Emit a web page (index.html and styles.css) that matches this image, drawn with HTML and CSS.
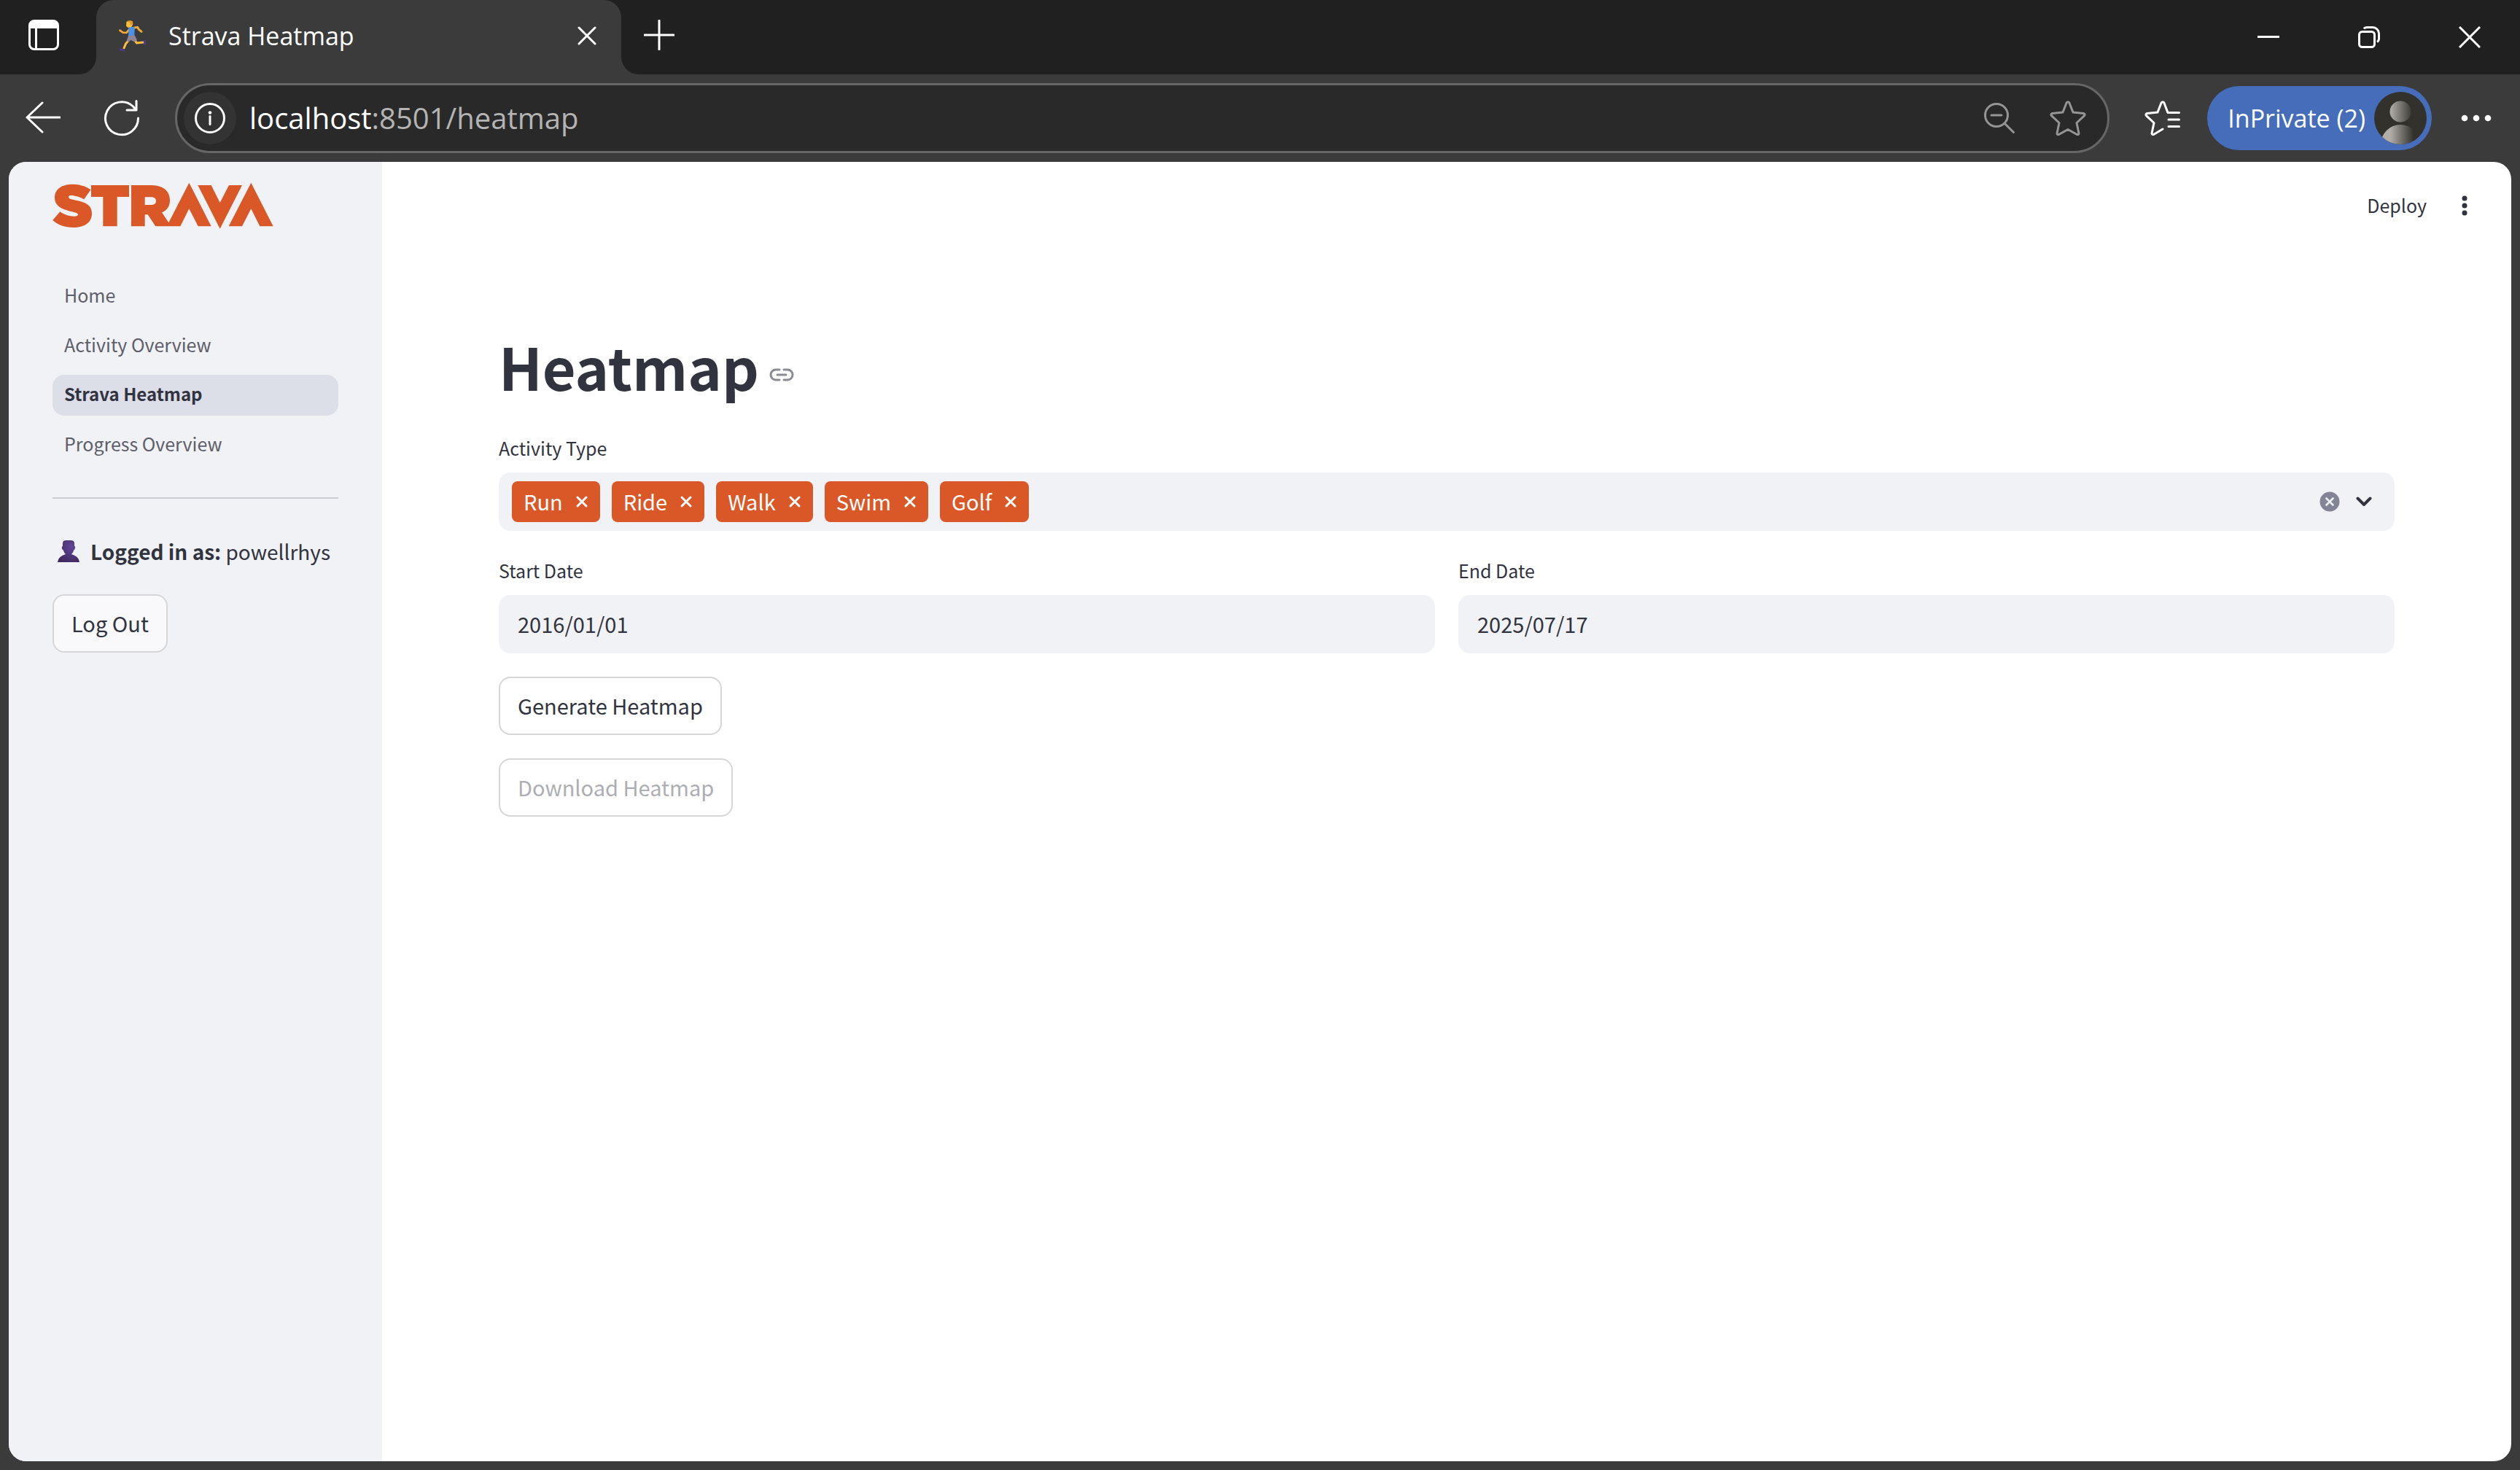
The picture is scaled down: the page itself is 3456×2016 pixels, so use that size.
FILE: index.html
```html
<!DOCTYPE html>
<html lang="en">
<head>
<meta charset="utf-8">
<title>Strava Heatmap</title>
<link rel="stylesheet" href="styles.css">
</head>
<body>
<header class="chrome">
  <div class="tabstrip">
    <div class="strip-start">
      <button class="icon-btn" aria-label="Tab actions">
        <svg width="42" height="42" viewBox="0 0 42 42"><path d="M8 0h26a8 8 0 0 1 8 8v26a8 8 0 0 1-8 8H8a8 8 0 0 1-8-8V8a8 8 0 0 1 8-8zM3 12v22a5 5 0 0 0 5 5h1V12zM12 12v27h22a5 5 0 0 0 5-5V12z" fill="#fff" fill-rule="evenodd"/></svg>
      </button>
    </div>
    <div class="tab-slot">
      <div class="tab">
        <svg class="favicon" width="40" height="44" viewBox="38 46 120 132">
          <path d="M88 82 72 100 58 99 45 90" fill="none" stroke="#f2a92e" stroke-width="8" stroke-linecap="round" stroke-linejoin="round"/>
          <path d="M102 80 118 77 124 87 134 95" fill="none" stroke="#f2a92e" stroke-width="9" stroke-linecap="round" stroke-linejoin="round"/>
          <path d="M82 130 70 144 62 163" fill="none" stroke="#fbbf3c" stroke-width="9" stroke-linecap="round" stroke-linejoin="round"/>
          <path d="M108 132 114 142 142 139" fill="none" stroke="#fbbf3c" stroke-width="9" stroke-linecap="round" stroke-linejoin="round"/>
          <path d="M41 166q10-3 22 0l1 8H48z" fill="#4b3a8f"/>
          <path d="M142 132l10-3v20l-7 2z" fill="#4b3a8f"/>
          <path d="M82 78q14-6 24 0l-1 36-25 3z" fill="#4a92e8"/>
          <path d="M80 113l26-3 10 20-10 8-16-8-12 8-4-8z" fill="#8f8496"/>
          <path d="M72 56q10-8 24-4l3 12-6 12-14 3-8-7z" fill="#fbbf3c"/>
          <path d="M72 54q12-8 26-1l1 12-10 3-3-10z" fill="#e09a25"/>
        </svg>
        <span class="tab-title">Strava Heatmap</span>
        <button class="icon-btn" aria-label="Close tab">
          <svg width="26" height="26" viewBox="0 0 26 26"><path d="M2 2l22 22M24 2L2 24" stroke="#fff" stroke-width="3" stroke-linecap="round"/></svg>
        </button>
      </div>
    </div>
    <div class="strip-rest">
      <button class="icon-btn" aria-label="New tab">
        <svg width="42" height="42" viewBox="0 0 42 42"><path d="M21 1v40M1 21h40" stroke="#fff" stroke-width="3" stroke-linecap="round"/></svg>
      </button>
      <div class="window-controls">
        <button class="icon-btn" aria-label="Minimize"><svg width="30" height="30" viewBox="0 0 30 30"><path d="M0 14.500h30" stroke="#fff" stroke-width="3"/></svg></button>
        <button class="icon-btn" aria-label="Restore"><svg width="30" height="30" viewBox="0 0 30 30" fill="none" stroke="#fff" stroke-width="3"><rect x="1.500" y="7.500" width="21" height="21" rx="4"/><path d="M8 3.500Q9 1.500 13 1.500h7a8.500 8.500 0 0 1 8.500 8.500v7q0 3-2.500 4.500"/></svg></button>
        <button class="icon-btn" aria-label="Close"><svg width="30" height="30" viewBox="0 0 30 30"><path d="M1 1l28 28M29 1L1 29" stroke="#fff" stroke-width="3"/></svg></button>
      </div>
    </div>
  </div>
  <div class="toolbar">
    <button class="icon-btn" aria-label="Back"><svg width="48" height="48" viewBox="0 0 48 48"><path d="M23 3L2 23l21 20M2 23h45" fill="none" stroke="#fff" stroke-width="3" stroke-linecap="round" stroke-linejoin="round"/></svg></button>
    <button class="icon-btn reload" aria-label="Refresh"><svg width="50" height="50" viewBox="0 0 50 50"><path d="M47.500 25A22.500 22.500 0 1 1 40 8.500L45 14M45 1.500V14H32" fill="none" stroke="#fff" stroke-width="3" stroke-linecap="round" stroke-linejoin="round"/></svg></button>
    <div class="address">
      <button class="site-info" aria-label="Site information"><svg width="42" height="42" viewBox="0 0 42 42"><circle cx="21" cy="21" r="19.500" fill="none" stroke="#fff" stroke-width="3"/><path d="M21 18.500v11" stroke="#fff" stroke-width="3" stroke-linecap="round"/><circle cx="21" cy="13.500" r="2.300" fill="#fff"/></svg></button>
      <div class="url"><span class="host">localhost</span>:8501/heatmap</div>
      <button class="icon-btn" aria-label="Zoom"><svg width="42" height="42" viewBox="0 0 42 42" fill="none" stroke="#959595" stroke-width="3" stroke-linecap="round"><circle cx="17" cy="17" r="15.500"/><path d="M10 17h14M28 28l12.500 12.500"/></svg></button>
      <button class="icon-btn" aria-label="Add to favorites"><svg width="50" height="48" viewBox="0 0 50 48"><path d="M23.200 2.800q1.800-2.200 3.600 0L32 16l14.500 1.500q2.500 1 1 3.200L37 30.500 40 45q-.300 2.200-2.500 1.500L25 39.500 12.500 46.500Q10.300 47.200 10 45l3-14.500L2.500 20.700q-1.500-2.200 1-3.200L18 16z" fill="none" stroke="#959595" stroke-width="3" stroke-linejoin="round"/></svg></button>
    </div>
    <button class="icon-btn favorites" aria-label="Favorites"><svg width="50" height="48" viewBox="0 0 50 48" fill="none" stroke="#fff" stroke-width="3" stroke-linecap="round" stroke-linejoin="round"><path d="M47.500 16.500H32L26.800 2.800q-1.800-2.200-3.600 0L18 16 3.500 17.500q-2.500 1-1 3.200L13 30.500 10 45q.300 2.200 2.500 1.500L25 39M33 26h14.500M33 35.500h14.500"/></svg></button>
    <button class="profile"><span>InPrivate (2)</span>
      <svg width="72" height="72" viewBox="0 0 72 72"><defs><linearGradient id="shade" gradientUnits="userSpaceOnUse" x1="22" x2="54" y1="0" y2="0"><stop offset="0" stop-color="#b1aeaa"/><stop offset="1" stop-color="#33312c"/></linearGradient><clipPath id="disc"><circle cx="36" cy="36" r="36"/></clipPath></defs><g clip-path="url(#disc)"><rect width="72" height="72" fill="#33312c"/><circle cx="36" cy="27" r="14.500" fill="url(#shade)"/><circle cx="36" cy="72" r="27" fill="url(#shade)"/></g></svg>
    </button>
    <button class="icon-btn" aria-label="Settings and more"><svg width="42" height="10" viewBox="0 0 42 10" fill="#fff"><circle cx="5" cy="5" r="4.300"/><circle cx="21" cy="5" r="4.300"/><circle cx="37" cy="5" r="4.300"/></svg></button>
  </div>
</header>

<div class="page">
  <aside class="sidebar">
    <svg class="logo" role="img" aria-label="Strava" width="303" height="64" viewBox="36 29 909 192" fill="#da5728">
      <path d="M193 60 166 99C150 90 128 83 112 83 104 83 102 86 102 90 102 100 125 101 150 107 182 115 198 131 198 158 198 195 168 215 121 215 88 215 57 205 37 185L67 150C84 162 105 169 126 169 136 169 141 167 141 162 141 153 118 152 94 144 62 134 45 119 45 91 45 58 74 37 118 37 148 37 173 45 193 60Z"/>
      <path d="M195 41H351V89H302V210H244V89H195Z"/>
      <path fill-rule="evenodd" d="M360 41H442C490 41 519 64 519 103 519 127 507 144 486 153L514 195 598 31 689 210H635L598 138 562 210H460L428 162H416V210H360ZM416 90V122H440C454 122 462 116 462 106 462 95 454 90 440 90Z"/>
      <path d="M634 41H689L725 113 762 41H816L725 220ZM761 210 853 31 944 210H889L853 138 816 210Z"/>
    </svg>
    <nav class="nav">
      <a href="#home">Home</a>
      <a href="#activity">Activity Overview</a>
      <a href="#heatmap" class="active" aria-current="page">Strava Heatmap</a>
      <a href="#progress">Progress Overview</a>
    </nav>
    <hr class="divider">
    <p class="user">
      <svg width="32" height="32" viewBox="0 0 32 32"><defs><radialGradient id="bust" cx=".65" cy=".3" r=".8"><stop offset="0" stop-color="#5f4596"/><stop offset="1" stop-color="#41285f"/></radialGradient></defs><path d="M8 5Q8 1 13 1h6q5 0 5 4v4q1.500 0 1 2.500T23.500 14Q22 18.500 20 20q10 3 11 11H1q1-8 11-11-2-1.500-3.500-6Q7 14 6.800 11.500T8 9z" fill="url(#bust)"/></svg>
      <span><strong>Logged in as:</strong> powellrhys</span>
    </p>
    <button class="btn">Log Out</button>
  </aside>

  <main class="main">
    <div class="app-header">
      <button class="deploy">Deploy</button>
      <button class="icon-btn" aria-label="Menu"><svg width="8" height="28" viewBox="0 0 8 28" fill="#31333f"><circle cx="4" cy="4" r="3.500"/><circle cx="4" cy="14" r="3.500"/><circle cx="4" cy="24" r="3.500"/></svg></button>
    </div>
    <div class="content">
      <div class="heading">
        <h1>Heatmap</h1>
        <a href="#heatmap" aria-label="Link to heading"><svg width="34" height="18" viewBox="0 0 34 18" fill="none" stroke="#8a8b92" stroke-width="3" stroke-linecap="round"><path d="M14 2H9a7 7 0 0 0 0 14h5M20 2h5a7 7 0 0 1 0 14h-5M11 9h12"/></svg></a>
      </div>
      <div class="field">
        <label for="types">Activity Type</label>
        <div class="multiselect">
          <span class="tag">Run<button class="icon-btn" aria-label="Remove Run"><svg width="18" height="18" viewBox="0 0 18 18"><path d="M3 3l12 12M15 3L3 15"/></svg></button></span>
          <span class="tag">Ride<button class="icon-btn" aria-label="Remove Ride"><svg width="18" height="18" viewBox="0 0 18 18"><path d="M3 3l12 12M15 3L3 15"/></svg></button></span>
          <span class="tag">Walk<button class="icon-btn" aria-label="Remove Walk"><svg width="18" height="18" viewBox="0 0 18 18"><path d="M3 3l12 12M15 3L3 15"/></svg></button></span>
          <span class="tag">Swim<button class="icon-btn" aria-label="Remove Swim"><svg width="18" height="18" viewBox="0 0 18 18"><path d="M3 3l12 12M15 3L3 15"/></svg></button></span>
          <span class="tag">Golf<button class="icon-btn" aria-label="Remove Golf"><svg width="18" height="18" viewBox="0 0 18 18"><path d="M3 3l12 12M15 3L3 15"/></svg></button></span>
          <input id="types" class="search" type="text" role="combobox" aria-expanded="false">
          <button class="icon-btn" aria-label="Clear all"><svg width="28" height="28" viewBox="0 0 28 28"><circle cx="14" cy="14" r="13.500" fill="#838495"/><path d="M9.500 9.500l9 9M18.500 9.500l-9 9" stroke="#f0f2f6" stroke-width="2.600" stroke-linecap="round"/></svg></button>
          <button class="icon-btn chevron" aria-label="Open"><svg width="22" height="14" viewBox="0 0 22 14"><path d="M2.500 2.500L11 11l8.500-8.500" fill="none" stroke="#31333f" stroke-width="4" stroke-linecap="round" stroke-linejoin="round"/></svg></button>
        </div>
      </div>
      <div class="dates">
        <div class="field"><label for="start">Start Date</label><input id="start" class="date" type="text" value="2016/01/01"></div>
        <div class="field"><label for="end">End Date</label><input id="end" class="date" type="text" value="2025/07/17"></div>
      </div>
      <button class="btn">Generate Heatmap</button>
      <button class="btn" disabled>Download Heatmap</button>
    </div>
  </main>
</div>
</body>
</html>
```
FILE: styles.css
```css
* { box-sizing: border-box; }

body {
  margin: 0;
  min-height: 100vh;
  display: flex;
  flex-direction: column;
  background: #3b3b3b;
  color: #31333f;
  font-family: "Noto Sans CJK SC", "Noto Sans", sans-serif;
  font-size: 29px;
}

button, input { font: inherit; color: inherit; }
button { cursor: pointer; }
svg { display: block; flex: none; }

.icon-btn {
  flex: none;
  display: flex;
  padding: 0;
  border: 0;
  background: none;
}

/* Browser frame */
.chrome {
  font-family: "Open Sans", "Noto Sans", sans-serif;
  color: #fff;
}

.tabstrip { display: flex; height: 102px; }

.strip-start {
  width: 132px;
  display: flex;
  align-items: center;
  padding: 0 0 6px 39px;
  background: #202020;
  border-radius: 0 0 24px 0;
}

.tab-slot { width: 720px; background: #202020; }

.tab {
  height: 100%;
  display: flex;
  align-items: center;
  padding: 0 34px 4px 30px;
  background: #3b3b3b;
  border-radius: 24px 24px 0 0;
}

.tab-title { flex: 1; margin-left: 29px; font-size: 34px; line-height: 48px; }

.strip-rest {
  flex: 1;
  display: flex;
  align-items: center;
  justify-content: space-between;
  padding: 0 54px 6px 31px;
  background: #202020;
  border-radius: 0 0 0 24px;
}

.window-controls { display: flex; gap: 108px; padding-top: 6px; }

.toolbar {
  height: 120px;
  display: flex;
  align-items: center;
  padding: 0 39px 0 35px;
}

.reload { margin: 0 48px 0 59px; }

.address {
  flex: 1;
  height: 96px;
  display: flex;
  align-items: center;
  padding: 0 29px 0 9px;
  background: #292929;
  border: 3px solid #666;
  border-radius: 48px;
}

.address .icon-btn { margin-left: 48px; }

.site-info {
  width: 72px;
  height: 72px;
  display: flex;
  align-items: center;
  justify-content: center;
  padding: 0;
  border: 0;
  border-radius: 50%;
  background: #333;
}

.url { flex: 1; margin-left: 18px; font-size: 40px; line-height: 60px; color: #b4b4b4; }
.host { color: #fff; }

.favorites { margin: 0 36px 0 48px; }

.profile {
  height: 88px;
  display: flex;
  align-items: center;
  gap: 12px;
  margin-right: 40px;
  padding: 0 7px 0 28px;
  border: 0;
  border-radius: 44px;
  background: #466dba;
  font-size: 34px;
  color: #fff;
}

/* Application */
.page {
  flex: 1;
  display: flex;
  margin: 0 12px 12px;
  background: #fff;
  border-radius: 24px;
  overflow: hidden;
}

.sidebar {
  width: 512px;
  padding: 28px 60px;
  background: #f0f2f6;
}

.nav {
  display: flex;
  flex-direction: column;
  gap: 12px;
  margin-top: 64px;
}

.nav a {
  height: 56px;
  padding: 0 16px;
  border-radius: 16px;
  font-size: 25px;
  line-height: 52px;
  color: #5d5e69;
  text-decoration: none;
}

.nav .active { background: #dcdee8; font-size: 24px; font-weight: 700; color: #31333f; }

.divider {
  height: 2px;
  margin: 44px 0 48px;
  border: 0;
  background: #cacbd0;
}

.user {
  display: flex;
  align-items: center;
  gap: 14px;
  margin: 0 0 35px;
  padding-left: 6px;
  font-size: 28px;
  line-height: 48px;
  white-space: nowrap;
}

.btn {
  height: 80px;
  padding: 0 24px 2px;
  background: #fff;
  border: 2px solid #d6d6d8;
  border-radius: 16px;
}

.btn:disabled { color: #adaeb3; }
.sidebar .btn { background: #f9f9fb; }

.main { flex: 1; }

.app-header {
  height: 120px;
  display: flex;
  align-items: center;
  justify-content: flex-end;
  gap: 48px;
  padding: 0 60px 0 0;
}

.deploy {
  padding: 0 0 2px;
  border: 0;
  background: none;
  font-size: 25px;
}

.content {
  display: flex;
  flex-direction: column;
  align-items: flex-start;
  gap: 32px;
  padding: 112px 160px;
}

.heading { display: flex; align-items: center; gap: 14px; padding-bottom: 10px; }
.heading a { padding-top: 24px; }
h1 { margin: 0; font-size: 79px; line-height: 96px; font-weight: 700; }

.field { width: 100%; display: flex; flex-direction: column; gap: 8px; }
label { height: 48px; font-size: 25px; line-height: 44px; }

.multiselect {
  height: 80px;
  display: flex;
  align-items: center;
  gap: 16px;
  padding: 0 31px 0 18px;
  background: #f0f2f6;
  border-radius: 16px;
}

.tag {
  height: 56px;
  display: flex;
  align-items: center;
  gap: 17px;
  padding: 0 16px;
  background: #da5728;
  border-radius: 8px;
  color: #fff;
  line-height: 52px;
  padding-bottom: 2px;
}

.tag .icon-btn { padding-top: 2px; }
.tag path { stroke: #fff; stroke-width: 3; stroke-linecap: round; }

.search { flex: 1; border: 0; background: none; outline: none; }
.chevron { margin-left: 6px; }

.dates { width: 100%; display: grid; grid-template-columns: 1fr 1fr; gap: 32px; }

.date {
  width: 100%;
  height: 80px;
  padding: 0 26px 2px;
  border: 0;
  border-radius: 16px;
  background: #f0f2f6;
}
```
